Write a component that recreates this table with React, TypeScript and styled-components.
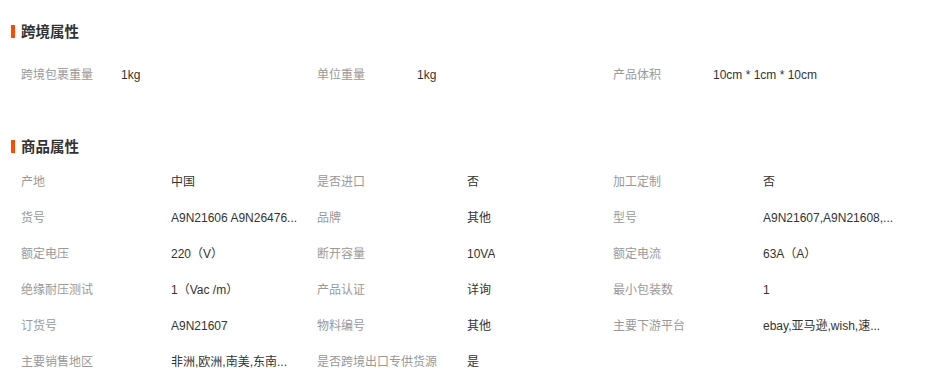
import * as React from 'react'
import styled, { createGlobalStyle } from 'styled-components'

const GlobalStyle = createGlobalStyle`
  html, body {
    margin: 0;
    padding: 0;
    background: #fff;
    font-family: "Liberation Sans", "Noto Sans CJK SC", sans-serif;
    font-size: 12px;
    color: #333;
  }
`

const S = {
  Page: styled.div`
    width: 933px;
    padding: 20px 0 0 11px;
    box-sizing: border-box;
  `,
  Section: styled.section<{ $gap: number }>`
    margin-bottom: ${p => p.$gap}px;
  `,
  Title: styled.h3<{ $below: number }>`
    display: flex;
    align-items: center;
    gap: 6px;
    margin: 0 0 ${p => p.$below}px;
    height: 24px;
    line-height: 20px;
    font-size: 14.5px;
    font-weight: bold;
    color: #333;
    &::before {
      content: '';
      width: 4px;
      height: 13px;
      margin-top: -1px;
      background: #ff4a00;
    }
  `,
  Grid: styled.div`
    display: grid;
    grid-template-columns: repeat(3, 296px);
  `,
  Item: styled.div<{ $labelWidth: number }>`
    display: flex;
    align-items: center;
    height: 36px;
    padding-left: 10px;
    line-height: 16px;
    span:first-child {
      width: ${p => p.$labelWidth}px;
      flex-shrink: 0;
      color: #999;
    }
    span:last-child {
      color: #333;
      white-space: nowrap;
      overflow: hidden;
      max-width: 130px;
    }
  `
}

const crossBorder = [
  ['跨境包裹重量', '1kg'],
  ['单位重量', '1kg'],
  ['产品体积', '10cm * 1cm * 10cm']
]

const product = [
  ['产地', '中国'],
  ['是否进口', '否'],
  ['加工定制', '否'],
  ['货号', 'A9N21606 A9N26476...'],
  ['品牌', '其他'],
  ['型号', 'A9N21607,A9N21608,...'],
  ['额定电压', '220（V）'],
  ['断开容量', '10VA'],
  ['额定电流', '63A（A）'],
  ['绝缘耐压测试', '1（Vac /m）'],
  ['产品认证', '详询'],
  ['最小包装数', '1'],
  ['订货号', 'A9N21607'],
  ['物料编号', '其他'],
  ['主要下游平台', 'ebay,亚马逊,wish,速...'],
  ['主要销售地区', '非洲,欧洲,南美,东南...'],
  ['是否跨境出口专供货源', '是']
]

export default function App() {
  return (
    <S.Page>
      <GlobalStyle />
      <S.Section $gap={42}>
        <S.Title $below={13}>跨境属性</S.Title>
        <S.Grid>
          {crossBorder.map(([k, v]) => (
            <S.Item key={k} $labelWidth={100}>
              <span>{k}</span>
              <span>{v}</span>
            </S.Item>
          ))}
        </S.Grid>
      </S.Section>
      <S.Section $gap={0}>
        <S.Title $below={5}>商品属性</S.Title>
        <S.Grid>
          {product.map(([k, v]) => (
            <S.Item key={k} $labelWidth={150}>
              <span>{k}</span>
              <span>{v}</span>
            </S.Item>
          ))}
        </S.Grid>
      </S.Section>
    </S.Page>
  )
}
